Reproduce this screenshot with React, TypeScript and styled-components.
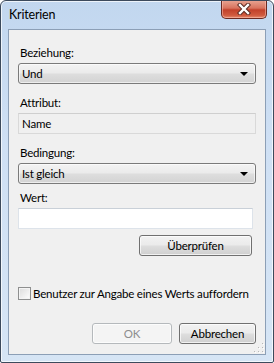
import React from "react"
import styled, { createGlobalStyle } from "styled-components"

const GlobalStyle = createGlobalStyle`
  html, body { margin: 0; padding: 0; background: #ffffff; }
  body { font-family: "Lato", "Noto Sans", sans-serif; font-size: 11.5px; letter-spacing: -0.2px; color: #000; }
  * { box-sizing: border-box; }
`

const Window = styled.div`
  width: 274px;
  height: 363px;
  display: flex;
  flex-direction: column;
  border: 1px solid #3c4a5c;
  border-radius: 6px 6px 2px 2px;
  background: linear-gradient(to bottom, #c2d7ef 0%, #cfe0f4 40%, #d6e5f5 100%);
  box-shadow: inset 0 0 0 1px rgba(255, 255, 255, 0.7);
  overflow: hidden;
`

const TitleBar = styled.div`
  height: 28px;
  flex-shrink: 0;
  display: flex;
  align-items: flex-start;
  justify-content: space-between;
  padding-left: 8px;
  padding-right: 6px;
`

const Title = styled.span`
  line-height: 28px;
  font-size: 12.5px;
  color: #000;
`

const CloseButton = styled.div`
  width: 46px;
  height: 19px;
  margin-top: -1px;
  display: flex;
  align-items: center;
  justify-content: center;
  border: 1px solid #6b2a22;
  border-top: none;
  border-radius: 0 0 5px 5px;
  background: linear-gradient(to bottom, #e9a795 0%, #d8735e 45%, #c2412a 55%, #d05a3f 85%, #e58c6f 100%);
  box-shadow: inset 0 0 0 1px rgba(255, 200, 185, 0.5);
`

const Client = styled.div`
  position: relative;
  flex: 1;
  margin: 0 7px 7px 7px;
  background: #f0f0f0;
  border: 1px solid #8c9fb6;
  padding: 15px 9px 0 9px;
  display: flex;
  flex-direction: column;
`

const Label = styled.div`
  height: 15px;
  line-height: 15px;
  padding-left: 2px;
  margin-bottom: 3px;
`

const Group = styled.div<{ $gap?: number }>`
  display: flex;
  flex-direction: column;
  margin-top: ${(p) => p.$gap ?? 0}px;
`

const Combo = styled.div`
  height: 21px;
  display: flex;
  align-items: center;
  justify-content: space-between;
  padding: 0 7px 0 3px;
  border: 1px solid #7a7a7a;
  border-radius: 3px;
  background: linear-gradient(to bottom, #f3f3f3 0%, #ebebeb 45%, #dddddd 55%, #d3d3d3 100%);
  box-shadow: inset 0 0 0 1px rgba(255, 255, 255, 0.6);
`

const Arrow = styled.span`
  width: 0;
  height: 0;
  border-left: 4px solid transparent;
  border-right: 4px solid transparent;
  border-top: 4px solid #000;
`

const TextBox = styled.div<{ $disabled?: boolean }>`
  height: 21px;
  line-height: 19px;
  padding-left: 3px;
  border: 1px solid ${(p) => (p.$disabled ? "#d9d9d9" : "#dde3ea")};
  border-top-color: ${(p) => (p.$disabled ? "#cfcfcf" : "#c9d0d8")};
  background: ${(p) => (p.$disabled ? "#f0f0f0" : "#ffffff")};
  width: ${(p) => (p.$disabled ? "238px" : "235px")};
`

const ButtonRow = styled.div<{ $gap: number; $right?: number }>`
  display: flex;
  justify-content: flex-end;
  gap: 7px;
  margin-top: ${(p) => p.$gap}px;
  padding-right: ${(p) => p.$right ?? 0}px;
`

const Button = styled.div<{ $width: number; $disabled?: boolean }>`
  width: ${(p) => p.$width}px;
  height: 21px;
  display: flex;
  align-items: center;
  justify-content: center;
  border-radius: 3px;
  border: 1px solid ${(p) => (p.$disabled ? "#b5b9bc" : "#707070")};
  color: ${(p) => (p.$disabled ? "#8d8d8d" : "#000")};
  background: ${(p) =>
    p.$disabled
      ? "#f4f4f4"
      : "linear-gradient(to bottom, #f2f2f2 0%, #ebebeb 45%, #dddddd 55%, #cfcfcf 100%)"};
  box-shadow: inset 0 0 0 1px rgba(255, 255, 255, 0.7);
`

const CheckRow = styled.label`
  display: flex;
  align-items: center;
  gap: 2px;
  margin-top: 30px;
  white-space: nowrap;
  line-height: 15px;
`

const CheckBox = styled.span`
  width: 13px;
  height: 13px;
  flex-shrink: 0;
  border: 1px solid #8e8f8f;
  background: linear-gradient(135deg, #dcdcdc 0%, #f4f4f4 70%, #ffffff 100%);
  box-shadow: inset 0 0 0 1px #f4f4f4;
`

const Grip = styled.svg`
  position: absolute;
  right: 1px;
  bottom: 1px;
`

function CloseGlyph() {
  return (
    <svg width="14" height="12" viewBox="0 0 14 12">
      <path d="M3 2 L11 10 M11 2 L3 10" stroke="#5a2a22" strokeWidth="4.4" strokeLinecap="square" />
      <path d="M3 2 L11 10 M11 2 L3 10" stroke="#ffffff" strokeWidth="2.4" strokeLinecap="square" />
    </svg>
  )
}

export default function App() {
  const dots = [
    [9, 1],
    [9, 5],
    [5, 5],
    [9, 9],
    [5, 9],
    [1, 9],
  ]
  return (
    <>
      <GlobalStyle />
      <Window>
        <TitleBar>
          <Title>Kriterien</Title>
          <CloseButton>
            <CloseGlyph />
          </CloseButton>
        </TitleBar>
        <Client>
          <Group>
            <Label>Beziehung:</Label>
            <Combo>
              <span>Und</span>
              <Arrow />
            </Combo>
          </Group>
          <Group $gap={11}>
            <Label>Attribut:</Label>
            <TextBox $disabled>Name</TextBox>
          </Group>
          <Group $gap={11}>
            <Label>Bedingung:</Label>
            <Combo>
              <span>Ist gleich</span>
              <Arrow />
            </Combo>
          </Group>
          <Group $gap={6}>
            <Label>Wert:</Label>
            <TextBox />
          </Group>
          <ButtonRow $gap={6} $right={4}>
            <Button $width={113}>Überprüfen</Button>
          </ButtonRow>
          <CheckRow>
            <CheckBox />
            <span>Benutzer zur Angabe eines Werts auffordern</span>
          </CheckRow>
          <ButtonRow $gap={22}>
            <Button $width={80} $disabled>
              OK
            </Button>
            <Button $width={77}>Abbrechen</Button>
          </ButtonRow>
          <Grip width="11" height="11" viewBox="0 0 11 11">
            {dots.map(([x, y]) => (
              <g key={`${x}-${y}`}>
                <rect x={x + 1} y={y + 1} width="1" height="1" fill="#ffffff" />
                <rect x={x} y={y} width="1" height="1" fill="#b8b8b8" />
              </g>
            ))}
          </Grip>
        </Client>
      </Window>
    </>
  )
}
